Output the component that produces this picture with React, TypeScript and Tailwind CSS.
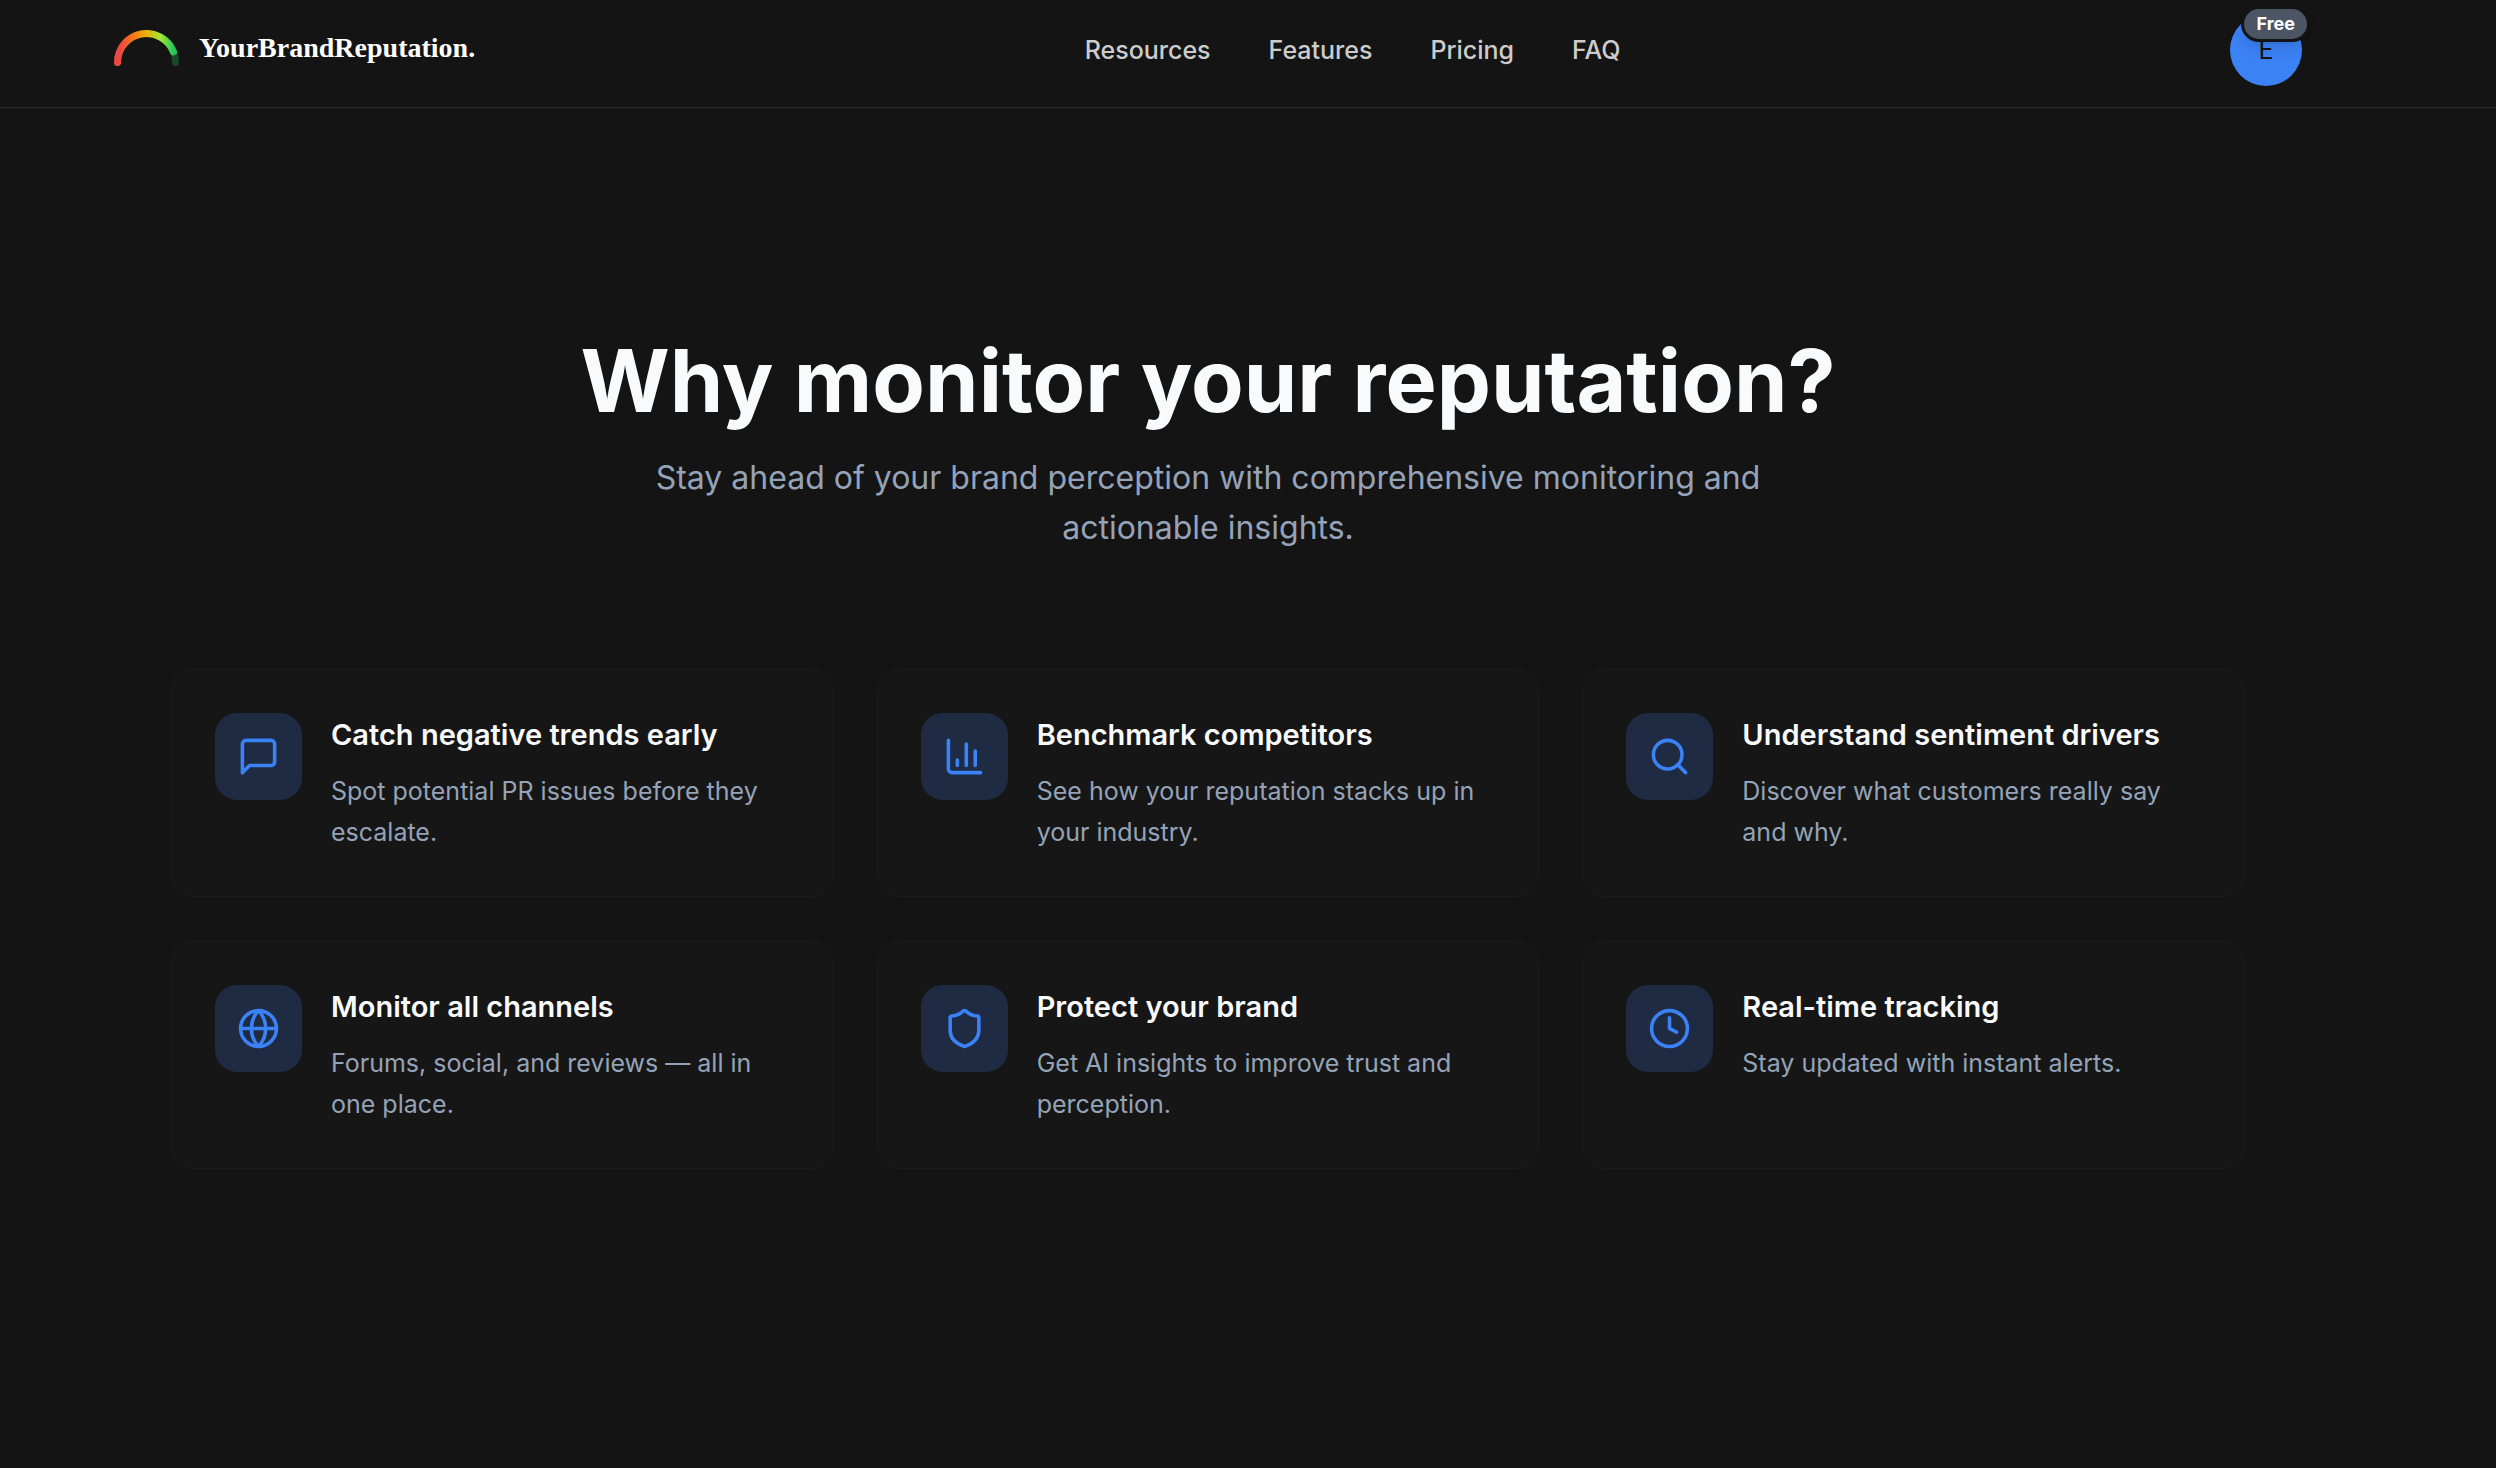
import type { ReactNode } from "react";
import { ChartColumn, Clock, Globe, Search, Shield } from "lucide-react";

type Feature = {
  title: string;
  description: string;
  icon: ReactNode;
};

const MessageIcon = () => (
  <svg
    viewBox="0 0 24 24"
    fill="none"
    stroke="currentColor"
    strokeWidth="2"
    strokeLinecap="round"
    strokeLinejoin="round"
    className="size-[43px]"
    aria-hidden="true"
  >
    <path d="M21 15a2 2 0 0 1-2 2H7l-4 4V5a2 2 0 0 1 2-2h14a2 2 0 0 1 2 2z" />
  </svg>
);

const navLinks = ["Resources", "Features", "Pricing", "FAQ"];

const features: Feature[] = [
  {
    title: "Catch negative trends early",
    description: "Spot potential PR issues before they escalate.",
    icon: <MessageIcon />,
  },
  {
    title: "Benchmark competitors",
    description: "See how your reputation stacks up in your industry.",
    icon: <ChartColumn className="size-[43px]" />,
  },
  {
    title: "Understand sentiment drivers",
    description: "Discover what customers really say and why.",
    icon: <Search className="size-[43px]" />,
  },
  {
    title: "Monitor all channels",
    description: "Forums, social, and reviews — all in one place.",
    icon: <Globe className="size-[43px]" />,
  },
  {
    title: "Protect your brand",
    description: "Get AI insights to improve trust and perception.",
    icon: <Shield className="size-[43px]" />,
  },
  {
    title: "Real-time tracking",
    description: "Stay updated with instant alerts.",
    icon: <Clock className="size-[43px]" />,
  },
];

const Logo = () => (
  <a href="#" className="flex items-center gap-5 pb-1">
    <svg width="65" height="36" viewBox="0 0 65 36" fill="none" aria-hidden="true">
      <defs>
        <linearGradient id="gauge" x1="0" y1="0" x2="65" y2="0" gradientUnits="userSpaceOnUse">
          <stop offset="0" stopColor="#ef4444" />
          <stop offset="0.08" stopColor="#ef4444" />
          <stop offset="0.28" stopColor="#f97316" />
          <stop offset="0.5" stopColor="#eab308" />
          <stop offset="0.72" stopColor="#a3e635" />
          <stop offset="0.92" stopColor="#22c55e" />
        </linearGradient>
      </defs>
      <path
        d="M3.5 32.5A29 29 0 0 1 61.5 32.5"
        stroke="#22c55e"
        strokeOpacity="0.3"
        strokeWidth="7"
        strokeLinecap="round"
      />
      <path
        d="M3.5 32.5A29 29 0 0 1 59.5 21.9"
        stroke="url(#gauge)"
        strokeWidth="7"
        strokeLinecap="round"
      />
    </svg>
    <span className="font-['Liberation_Serif',serif] text-[28px] leading-9 font-bold text-white">
      YourBrandReputation.
    </span>
  </a>
);

const Header = () => (
  <header className="border-b border-[#2a2a2a] pr-20">
    <div className="mx-auto flex max-w-[2304px] items-center justify-between px-[58px] pt-3.5 pb-[21px]">
      <Logo />

      <nav className="flex gap-[58px] text-[25px] leading-9 font-medium text-[#cccccc]">
        {navLinks.map((link) => (
          <a key={link} href={`#${link.toLowerCase()}`}>
            {link}
          </a>
        ))}
      </nav>

      <button
        type="button"
        aria-label="Account"
        className="relative size-[72px] rounded-full bg-[#3b82f6] text-[25px] leading-9 text-[#141414]"
      >
        E
        <span className="absolute -top-2 -right-2 rounded-full border-3 border-[#141414] bg-[#4b5563] px-3 text-[18px] leading-[30px] font-bold text-white shadow-lg">
          Free
        </span>
      </button>
    </div>
  </header>
);

const FeatureCard = ({ title, description, icon }: Feature) => (
  <article className="flex items-start gap-[29px] rounded-[22px] border border-[#1b1b1b] bg-[#161616] p-[43px]">
    <div className="flex size-[87px] shrink-0 items-center justify-center rounded-[22px] bg-[#1e2b42] text-[#3b82f6]">
      {icon}
    </div>
    <div>
      <h3 className="mb-3.5 text-[29px] leading-[44px] font-semibold text-[#f8fafc]">{title}</h3>
      <p className="text-[25px] leading-[41px] text-[#94a3b8]">{description}</p>
    </div>
  </article>
);

const App = () => {
  return (
    <div className="min-h-screen bg-[#141414] font-['Inter',sans-serif]">
      <Header />

      <main className="py-[230px] pr-20">
        <div className="mx-auto max-w-[2074px]">
          <div className="mb-[116px] text-center">
            <h2 className="mb-[29px] text-[86px] leading-[86px] font-bold text-[#f8fafc]">
              Why monitor your reputation?
            </h2>
            <p className="mx-auto max-w-[1210px] text-[32px] leading-[50px] text-[#94a3b8]">
              Stay ahead of your brand perception with comprehensive monitoring and actionable
              insights.
            </p>
          </div>

          <div className="grid grid-cols-3 gap-x-[43px] gap-y-11">
            {features.map((feature) => (
              <FeatureCard key={feature.title} {...feature} />
            ))}
          </div>
        </div>
      </main>
    </div>
  );
};

export default App;
